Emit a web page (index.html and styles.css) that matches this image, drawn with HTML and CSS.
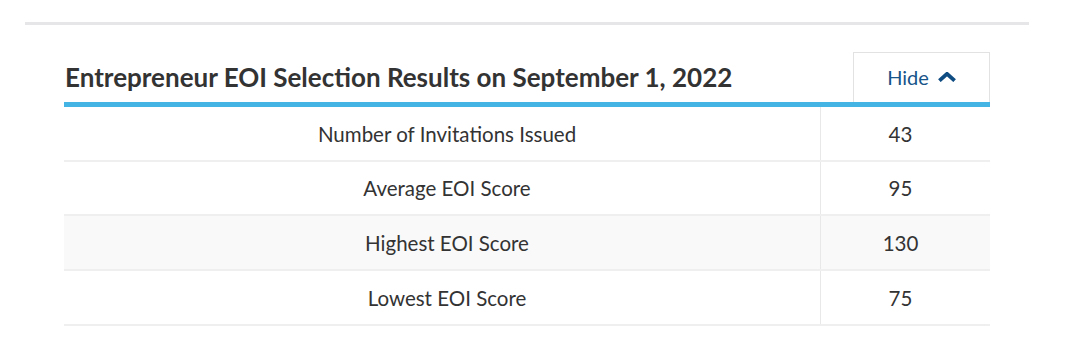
FILE: index.html
```html
<!DOCTYPE html>
<html lang="en">
<head>
<meta charset="utf-8">
<title>Entrepreneur EOI Selection Results</title>
<link rel="stylesheet" href="styles.css">
</head>
<body>
<section class="panel">
  <div class="panel-head">
    <h2 class="panel-title">Entrepreneur EOI Selection Results on September 1, 2022</h2>
    <button class="toggle" type="button">
      <span class="toggle-label">Hide</span>
      <svg class="toggle-icon" viewBox="0 0 20 10" width="20" height="10" aria-hidden="true">
        <polyline points="2.4,8.6 10,1.9 17.6,8.6" fill="none" stroke="currentColor" stroke-width="3.9" stroke-linejoin="miter" stroke-linecap="butt"/>
      </svg>
    </button>
  </div>
  <table class="results">
    <tbody>
      <tr><td class="label">Number of Invitations Issued</td><td class="value">43</td></tr>
      <tr class="short"><td class="label">Average EOI Score</td><td class="value">95</td></tr>
      <tr class="shaded"><td class="label">Highest EOI Score</td><td class="value">130</td></tr>
      <tr><td class="label">Lowest EOI Score</td><td class="value">75</td></tr>
    </tbody>
  </table>
</section>
</body>
</html>
```
FILE: styles.css
```css
html, body {
  margin: 0;
  padding: 0;
  background: #ffffff;
}

body {
  font-family: "Lato", "Liberation Sans", sans-serif;
  color: #333333;
  padding-top: 22px;
}

.panel {
  width: 1004px;
  margin-left: 25px;
  border-top: 3px solid #e6e6e9;
  padding: 27px 39px 0;
  box-sizing: border-box;
}

.panel-head {
  display: flex;
  align-items: center;
  justify-content: space-between;
  border-bottom: 5px solid #44b4e4;
}

.panel-title {
  margin: 0;
  padding-left: 1px;
  font-size: 26px;
  font-weight: 700;
  line-height: 30px;
  color: #333333;
}

.toggle {
  display: flex;
  align-items: center;
  justify-content: center;
  gap: 8px;
  width: 137px;
  height: 50px;
  box-sizing: border-box;
  margin: 0;
  padding: 0 0 1px 1px;
  background: #ffffff;
  border: 1px solid #e2e2e2;
  border-bottom: 0;
  color: #175489;
  font-family: "Lato", "Liberation Sans", sans-serif;
  font-size: 20px;
  line-height: 24px;
  cursor: pointer;
}

.toggle-label {
  display: block;
}

.toggle-icon {
  display: block;
  width: 20px;
  height: 10px;
  color: #0f4c82;
}

.results {
  width: 100%;
  border-collapse: collapse;
  font-size: 20.5px;
  line-height: 24px;
  color: #333333;
}

.results td {
  height: 53px;
  padding: 0;
  border-bottom: 2px solid #efefef;
  text-align: center;
  vertical-align: middle;
}

.results .short td {
  height: 52px;
}

.results .label {
  width: 746px;
  padding-left: 10px;
  border-right: 1px solid #e8e8e8;
}

.results .value {
  padding-right: 10px;
}

.results .shaded td {
  background: #f9f9f9;
}
```
